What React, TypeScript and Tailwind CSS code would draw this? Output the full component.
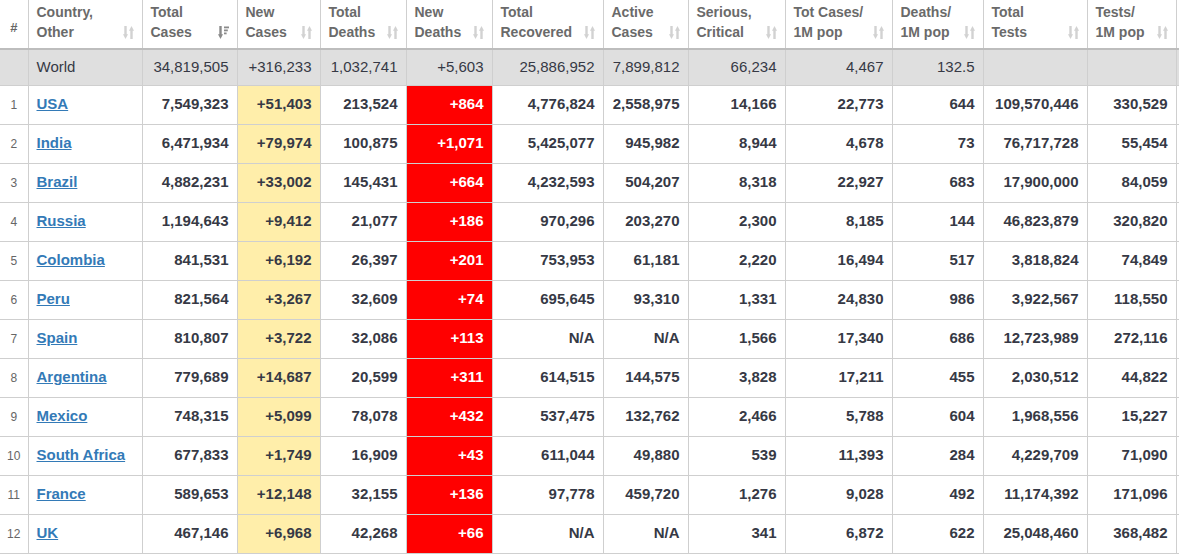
import React from 'react';

type Row = {
  n: number;
  country: string;
  total: string;
  newCases: string;
  deaths: string;
  newDeaths: string;
  recovered: string;
  active: string;
  serious: string;
  casesPerM: string;
  deathsPerM: string;
  tests: string;
  testsPerM: string;
};

const rows: Row[] = [
  { n: 1, country: 'USA', total: '7,549,323', newCases: '+51,403', deaths: '213,524', newDeaths: '+864', recovered: '4,776,824', active: '2,558,975', serious: '14,166', casesPerM: '22,773', deathsPerM: '644', tests: '109,570,446', testsPerM: '330,529' },
  { n: 2, country: 'India', total: '6,471,934', newCases: '+79,974', deaths: '100,875', newDeaths: '+1,071', recovered: '5,425,077', active: '945,982', serious: '8,944', casesPerM: '4,678', deathsPerM: '73', tests: '76,717,728', testsPerM: '55,454' },
  { n: 3, country: 'Brazil', total: '4,882,231', newCases: '+33,002', deaths: '145,431', newDeaths: '+664', recovered: '4,232,593', active: '504,207', serious: '8,318', casesPerM: '22,927', deathsPerM: '683', tests: '17,900,000', testsPerM: '84,059' },
  { n: 4, country: 'Russia', total: '1,194,643', newCases: '+9,412', deaths: '21,077', newDeaths: '+186', recovered: '970,296', active: '203,270', serious: '2,300', casesPerM: '8,185', deathsPerM: '144', tests: '46,823,879', testsPerM: '320,820' },
  { n: 5, country: 'Colombia', total: '841,531', newCases: '+6,192', deaths: '26,397', newDeaths: '+201', recovered: '753,953', active: '61,181', serious: '2,220', casesPerM: '16,494', deathsPerM: '517', tests: '3,818,824', testsPerM: '74,849' },
  { n: 6, country: 'Peru', total: '821,564', newCases: '+3,267', deaths: '32,609', newDeaths: '+74', recovered: '695,645', active: '93,310', serious: '1,331', casesPerM: '24,830', deathsPerM: '986', tests: '3,922,567', testsPerM: '118,550' },
  { n: 7, country: 'Spain', total: '810,807', newCases: '+3,722', deaths: '32,086', newDeaths: '+113', recovered: 'N/A', active: 'N/A', serious: '1,566', casesPerM: '17,340', deathsPerM: '686', tests: '12,723,989', testsPerM: '272,116' },
  { n: 8, country: 'Argentina', total: '779,689', newCases: '+14,687', deaths: '20,599', newDeaths: '+311', recovered: '614,515', active: '144,575', serious: '3,828', casesPerM: '17,211', deathsPerM: '455', tests: '2,030,512', testsPerM: '44,822' },
  { n: 9, country: 'Mexico', total: '748,315', newCases: '+5,099', deaths: '78,078', newDeaths: '+432', recovered: '537,475', active: '132,762', serious: '2,466', casesPerM: '5,788', deathsPerM: '604', tests: '1,968,556', testsPerM: '15,227' },
  { n: 10, country: 'South Africa', total: '677,833', newCases: '+1,749', deaths: '16,909', newDeaths: '+43', recovered: '611,044', active: '49,880', serious: '539', casesPerM: '11,393', deathsPerM: '284', tests: '4,229,709', testsPerM: '71,090' },
  { n: 11, country: 'France', total: '589,653', newCases: '+12,148', deaths: '32,155', newDeaths: '+136', recovered: '97,778', active: '459,720', serious: '1,276', casesPerM: '9,028', deathsPerM: '492', tests: '11,174,392', testsPerM: '171,096' },
  { n: 12, country: 'UK', total: '467,146', newCases: '+6,968', deaths: '42,268', newDeaths: '+66', recovered: 'N/A', active: 'N/A', serious: '341', casesPerM: '6,872', deathsPerM: '622', tests: '25,048,460', testsPerM: '368,482' },
];

const SortIcon = () => (
  <svg width="11" height="13" viewBox="0 0 11 13" className="shrink-0">
    <g fill="#d2d2d2">
      <rect x="1.3" y="0" width="2.4" height="9" />
      <path d="M0 8.2 H5 L2.5 13 Z" />
      <rect x="7.3" y="4" width="2.4" height="9" />
      <path d="M6 4.8 H11 L8.5 0 Z" />
    </g>
  </svg>
);

const SortDescIcon = () => (
  <svg width="11" height="13" viewBox="0 0 11 13" className="shrink-0">
    <g fill="#8a8a8a">
      <rect x="1.3" y="0" width="2.4" height="9" />
      <path d="M0 8.2 H5 L2.5 13 Z" />
      <rect x="6" y="0.5" width="5" height="1.8" />
      <rect x="6" y="3.5" width="3.8" height="1.8" />
      <rect x="6" y="6.5" width="2.6" height="1.8" />
    </g>
  </svg>
);

const headers: { l1: string; l2: string; desc?: boolean }[] = [
  { l1: 'Country,', l2: 'Other' },
  { l1: 'Total', l2: 'Cases', desc: true },
  { l1: 'New', l2: 'Cases' },
  { l1: 'Total', l2: 'Deaths' },
  { l1: 'New', l2: 'Deaths' },
  { l1: 'Total', l2: 'Recovered' },
  { l1: 'Active', l2: 'Cases' },
  { l1: 'Serious,', l2: 'Critical' },
  { l1: 'Tot Cases/', l2: '1M pop' },
  { l1: 'Deaths/', l2: '1M pop' },
  { l1: 'Total', l2: 'Tests' },
  { l1: 'Tests/', l2: '1M pop' },
];

const widths = ['w-[28px]', 'w-[114px]', 'w-[95px]', 'w-[83px]', 'w-[86px]', 'w-[86px]', 'w-[111px]', 'w-[85px]', 'w-[97px]', 'w-[107px]', 'w-[91px]', 'w-[104px]', 'w-[89px]', 'w-[120px]'];

const cell = 'border-r border-b border-[#cfcfcf] px-[8px] text-right';

export default function App() {
  return (
    <div className="w-[1179px] h-[554px] overflow-hidden bg-white" style={{ fontFamily: '"Liberation Sans", Arial, sans-serif' }}>
      <table className="table-fixed border-collapse w-[1296px] text-[#363945]">
        <colgroup>
          {widths.map((w, i) => (
            <col key={i} className={w} />
          ))}
        </colgroup>
        <thead>
          <tr className="h-[49px] border-b-2 border-[#bdbdbd]">
            <th className="border-r border-[#cfcfcf] text-[13px] font-bold text-[#666] text-center align-middle pt-[8px]">#</th>
            {headers.map((h, i) => (
              <th key={i} className="border-r border-[#cfcfcf] pl-[8px] pr-[8px] align-top pt-[2px] text-left">
                <div className="text-[14px] font-bold text-[#6a6a6a] leading-[20px]">
                  <div className="whitespace-nowrap">{h.l1}</div>
                  <div className="flex items-center justify-between whitespace-nowrap">
                    <span>{h.l2}</span>
                    {h.desc ? <SortDescIcon /> : <SortIcon />}
                  </div>
                </div>
              </th>
            ))}
            <th className="border-r border-[#cfcfcf]" />
          </tr>
        </thead>
        <tbody>
          <tr className="h-[36px] bg-[#dfdfdf] text-[15px] font-normal">
            <td className="border-r border-b border-[#cfcfcf]" />
            <td className="border-r border-b border-[#cfcfcf] px-[8px] text-left">World</td>
            <td className={cell}>34,819,505</td>
            <td className={cell}>+316,233</td>
            <td className={cell}>1,032,741</td>
            <td className={cell}>+5,603</td>
            <td className={cell}>25,886,952</td>
            <td className={cell}>7,899,812</td>
            <td className={cell}>66,234</td>
            <td className={cell}>4,467</td>
            <td className={cell}>132.5</td>
            <td className={cell} />
            <td className={cell} />
            <td className={cell} />
          </tr>
          {rows.map((r) => (
            <tr key={r.n} className="h-[39px] text-[15px] font-bold">
              <td className="border-r border-b border-[#cfcfcf] text-center text-[12px] font-normal text-[#666]">{r.n}</td>
              <td className="border-r border-b border-[#cfcfcf] px-[8px] text-left">
                <a className="text-[#337ab7] underline whitespace-nowrap">{r.country}</a>
              </td>
              <td className={cell}>{r.total}</td>
              <td className={`${cell} bg-[#ffeeaa]`}>{r.newCases}</td>
              <td className={cell}>{r.deaths}</td>
              <td className={`${cell} bg-[#ff0000] text-white`}>{r.newDeaths}</td>
              <td className={cell}>{r.recovered}</td>
              <td className={cell}>{r.active}</td>
              <td className={cell}>{r.serious}</td>
              <td className={cell}>{r.casesPerM}</td>
              <td className={cell}>{r.deathsPerM}</td>
              <td className={cell}>{r.tests}</td>
              <td className={cell}>{r.testsPerM}</td>
              <td className={cell} />
            </tr>
          ))}
        </tbody>
      </table>
    </div>
  );
}
